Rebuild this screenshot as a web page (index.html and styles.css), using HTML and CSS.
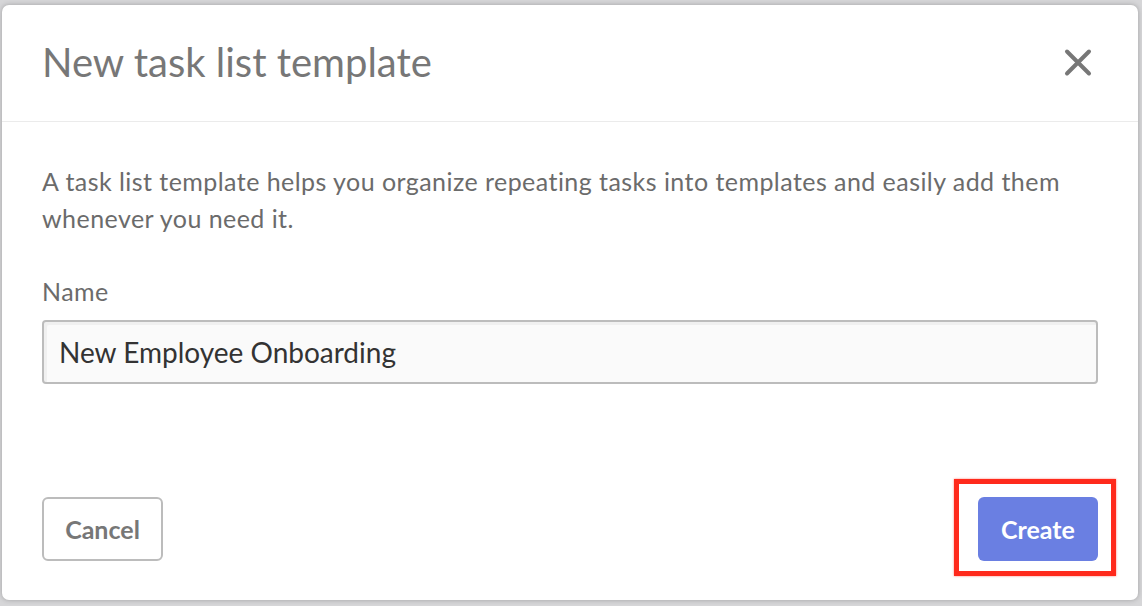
FILE: index.html
```html
<!DOCTYPE html>
<html lang="en">
<head>
<meta charset="UTF-8">
<meta name="viewport" content="width=device-width, initial-scale=1.0">
<title>New task list template</title>
<link rel="stylesheet" href="styles.css">
</head>
<body>

<div class="modal">
    <!-- Cabeçalho -->
    <div class="modal-header">
        <h1>New task list template</h1>
        <button class="close" aria-label="Close">
            <svg width="28" height="29" viewBox="0 0 28 29">
                <path d="M3 3.5 L25 25.5 M25 3.5 L3 25.5" stroke="#777" stroke-width="4" stroke-linecap="round" fill="none"/>
            </svg>
        </button>
    </div>

    <div class="modal-body">
        <p class="intro">A task list template helps you organize repeating tasks into templates and easily add them whenever you need it.</p>

        <label for="name">Name</label>
        <input type="text" id="name" value="New Employee Onboarding">
    </div>

    <div class="modal-footer">
        <button class="btn btn-cancel">Cancel</button>
        <span class="highlight">
            <button class="btn btn-create">Create</button>
        </span>
    </div>
</div>

</body>
</html>
```

FILE: styles.css
```css
body {
    font-family: Lato, "Open Sans", sans-serif;
    margin: 0;
    padding: 5px 4px 6px 2px;
    background-color: #d6d6d8;
}

.modal {
    height: 595px;
    box-sizing: border-box;
    display: flex;
    flex-direction: column;
    background-color: #fff;
    border-radius: 7px;
    box-shadow: 0 0 5px rgba(0, 0, 0, 0.25);
}

.modal-header {
    display: flex;
    align-items: center;
    justify-content: space-between;
    padding: 33px 46px 35px 40px;
    border-bottom: 1px solid #ebebeb;
}

h1 {
    margin: 0;
    font-size: 40px;
    font-weight: 400;
    line-height: 48px;
    color: #777;
}

.close {
    border: none;
    background: none;
    padding: 0;
    display: block;
    cursor: pointer;
}

.close svg {
    display: block;
}

.modal-body {
    padding: 41px 40px 0 40px;
}

.intro {
    margin: 0 0 36px 0;
    font-size: 25px;
    line-height: 37px;
    letter-spacing: 0.45px;
    color: #6b6b6b;
}

label {
    display: block;
    font-size: 25px;
    line-height: 36px;
    letter-spacing: 0.45px;
    color: #6b6b6b;
    margin-bottom: 11px;
}

input[type="text"] {
    display: block;
    width: 100%;
    height: 64px;
    box-sizing: border-box;
    padding: 0 15px;
    font-family: inherit;
    font-size: 28px;
    color: #333;
    border: 2px solid #bcbcbc;
    border-radius: 4px;
    background-color: #fafafa;
    box-shadow: inset 3px 3px 0 #f0f0f0;
    outline: none;
}

.modal-footer {
    margin-top: auto;
    display: flex;
    justify-content: space-between;
    align-items: center;
    padding: 0 40px 39px 40px;
}

.btn {
    height: 64px;
    font-family: inherit;
    font-size: 25px;
    font-weight: 700;
    border-radius: 6px;
    cursor: pointer;
}

.btn-cancel {
    width: 121px;
    background-color: #fff;
    border: 2px solid #bcbcbc;
    color: #777;
}

.btn-create {
    width: 120px;
    border: none;
    background-color: #6a7fe2;
    color: #fff;
}

/* marcação vermelha em volta do botão */
.highlight {
    position: relative;
    display: block;
}

.highlight::after {
    content: "";
    position: absolute;
    top: -18px;
    bottom: -15px;
    left: -24px;
    right: -18px;
    border: 5px solid #ff2a1c;
    box-shadow: 0 0 2px rgba(255, 42, 28, 0.6);
    pointer-events: none;
}
```
